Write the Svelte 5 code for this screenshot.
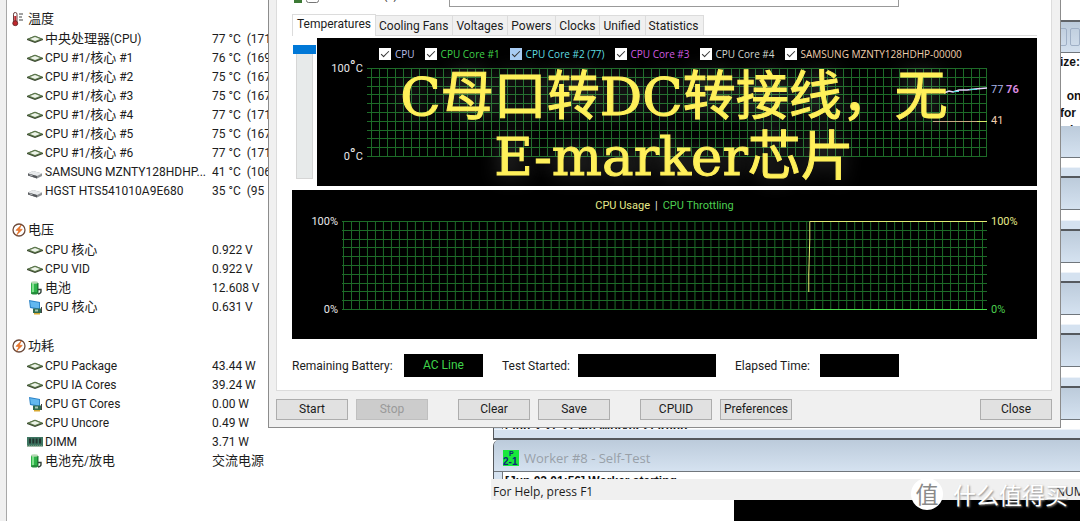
<script>
  const groups = [
    {
      title: '温度', icon: 'thermo',
      rows: [
        ['chip', '中央处理器(CPU)', '77 °C  (171'],
        ['chip', 'CPU #1/核心 #1', '76 °C  (169'],
        ['chip', 'CPU #1/核心 #2', '75 °C  (167'],
        ['chip', 'CPU #1/核心 #3', '75 °C  (167'],
        ['chip', 'CPU #1/核心 #4', '77 °C  (171'],
        ['chip', 'CPU #1/核心 #5', '75 °C  (167'],
        ['chip', 'CPU #1/核心 #6', '77 °C  (171'],
        ['disk', 'SAMSUNG MZNTY128HDHP...', '41 °C  (106'],
        ['disk', 'HGST HTS541010A9E680', '35 °C  (95']
      ]
    },
    {
      title: '电压', icon: 'bolt',
      rows: [
        ['chip', 'CPU 核心', '0.922 V'],
        ['chip', 'CPU VID', '0.922 V'],
        ['battery', '电池', '12.608 V'],
        ['screen', 'GPU 核心', '0.631 V']
      ]
    },
    {
      title: '功耗', icon: 'bolt',
      rows: [
        ['chip', 'CPU Package', '43.44 W'],
        ['chip', 'CPU IA Cores', '39.24 W'],
        ['screen', 'CPU GT Cores', '0.00 W'],
        ['chip', 'CPU Uncore', '0.49 W'],
        ['dimm', 'DIMM', '3.71 W'],
        ['battery', '电池充/放电', '交流电源']
      ]
    }
  ];

  const tabs = ['Temperatures', 'Cooling Fans', 'Voltages', 'Powers', 'Clocks', 'Unified', 'Statistics'];
  let activeTab = $state('Temperatures');

  let series = $state([
    { name: 'CPU', color: '#b9bfe8', on: true },
    { name: 'CPU Core #1', color: '#3fd24a', on: true },
    { name: 'CPU Core #2 (77)', color: '#5fdde0', on: true, hot: true },
    { name: 'CPU Core #3', color: '#d05be0', on: true },
    { name: 'CPU Core #4', color: '#d0d8d0', on: true },
    { name: 'SAMSUNG MZNTY128HDHP-00000', color: '#f0cfae', on: true }
  ]);

  const workers = [2, 3, 4, 5, 6, 7];
  const steps = (start, gap, count) => Array.from({ length: count }, (_, i) => start + i * gap);

  // Chinese runs are set one pixel larger than the Latin text beside them.
  const runs = (text) => text.split(/([\u4e00-\u9fff]+)/).filter(Boolean);
  const isHan = (run) => /[\u4e00-\u9fff]/.test(run);
</script>

{#snippet icon(kind)}
  {#if kind === 'chip'}
    <svg width="16" height="16" viewBox="0 0 16 16" aria-hidden="true">
      <path d="M0 8 8 4.800 16 8v1l-8 3-8-3z" fill="#39442f" />
      <path d="M0 8 8 4.800 16 8l-8 3z" fill="#5f7b4e" />
      <path d="M3 8l5-2 5 2-5 1.900z" fill="#eef4ea" />
    </svg>
  {:else if kind === 'disk'}
    <svg width="16" height="16" viewBox="0 0 16 16" aria-hidden="true">
      <path d="M1 9.500 6 7l9 2.500V12l-5 2.500-9-3z" fill="#8d9093" />
      <path d="M1 9.500 6 7l9 2.500-5 2.500z" fill="#e8eaec" />
      <path d="m1 9.500 9 2.500v2.500l-9-3z" fill="#55585c" />
      <path d="m2.500 10.800 3 .9" stroke="#bfc3c6" />
    </svg>
  {:else if kind === 'battery'}
    <svg width="16" height="16" viewBox="0 0 16 16" aria-hidden="true">
      <path d="M4 2.500h7v11H4z" fill="#2fb34a" />
      <path d="M5 3h2v10H5z" fill="#7fe08c" />
      <path d="M10 3h1.500v10H10z" fill="#1c7f33" />
      <ellipse cx="7.500" cy="2.500" rx="3.500" ry="1.200" fill="#b6d8b4" />
      <ellipse cx="7.500" cy="13.300" rx="3.500" ry="1.300" fill="#238a3a" />
      <path d="M11 9.500h3v2q0 2-3 2.500" fill="none" stroke="#33423a" stroke-width="1.400" />
    </svg>
  {:else if kind === 'screen'}
    <svg width="16" height="16" viewBox="0 0 16 16" aria-hidden="true">
      <path d="m2 1 11 2v8L3 9z" fill="#2c83c7" />
      <path d="m3 2.200 9 1.600v5.800L4 8z" fill="#62b8ef" />
      <path d="M6 9.500h9V14H6z" fill="#2f6b50" />
      <path d="M8 10.500h3v2H8z" fill="#a8c7b4" />
      <path d="M7 14h6v1.500H7z" fill="#d8a932" />
      <path d="M14.500 8v6" stroke="#444" />
    </svg>
  {:else if kind === 'dimm'}
    <svg width="16" height="16" viewBox="0 0 16 16" aria-hidden="true">
      <path d="M0 3h16v9.500H0z" fill="#3d7561" />
      <path d="M2 4.500h2v5H2zm3.300 0h2v5h-2zm3.300 0h2v5h-2zm3.400 0h2v5h-2z" fill="#22352f" />
      <path d="M0 12h16" stroke="#9fb58c" stroke-dasharray="1 1" />
    </svg>
  {:else if kind === 'thermo'}
    <svg width="14" height="16" viewBox="0 0 14 16" aria-hidden="true">
      <rect x="1.500" y="1.500" width="3.500" height="10" rx="1.700" fill="#fff" stroke="#6b3d3d" />
      <path d="M3.250 5v8" stroke="#c0272d" stroke-width="2" />
      <circle cx="3.250" cy="12.200" r="2.500" fill="#c0272d" stroke="#5c2323" stroke-width=".8" />
      <path d="M7 3h4M7 6h3M7 9h4" stroke="#444" stroke-width="1.200" />
    </svg>
  {:else}
    <svg width="14" height="14" viewBox="0 0 14 14" aria-hidden="true">
      <circle cx="7" cy="7" r="6" fill="#fff" stroke="#6d4a3a" stroke-width="1.300" />
      <path d="M9.200 2 4 7.300l3 .2L4.600 12 10.300 6.400l-3-.2z" fill="#f07a2a" stroke="#d9611a" stroke-width=".6" />
    </svg>
  {/if}
{/snippet}

{#snippet mixed(text)}<span>{#each runs(text) as run}{#if isHan(run)}<span class="han">{run}</span>{:else}{run}{/if}{/each}</span>{/snippet}

<div class="desktop">
  <section class="sensors" aria-label="传感器">
    {#each groups as group}
      <table>
        <colgroup><col class="name" /><col /></colgroup>
        <thead>
          <tr><th colspan="2"><span class="cell head">{@render icon(group.icon)}{@render mixed(group.title)}</span></th></tr>
        </thead>
        <tbody>
          {#each group.rows as [kind, name, value]}
            <tr>
              <td><span class="cell">{@render icon(kind)}{@render mixed(name)}</span></td>
              <td>{@render mixed(value)}</td>
            </tr>
          {/each}
        </tbody>
      </table>
    {/each}
  </section>

  <div class="console"></div>

  <section class="mdi" aria-label="Workers">
    <div class="top">
      <div class="blank"></div>
      <div class="caption"><i></i><i></i></div>
      <div class="log"><p>ize:</p><p></p><p>&nbsp; on</p><p>for</p><p>a b</p></div>
    </div>
    <div class="stack">
      {#each workers as id}
        <div class="worker">
          <div class="bar"></div>
          <div class="output">{#if id === 7}[Jun 2 21:21:50] Worker starting{/if}</div>
          <div class="edge"></div>
        </div>
      {/each}
    </div>
    <div class="worker last">
      <div class="bar">
        <svg width="16" height="16" viewBox="0 0 16 16" aria-hidden="true">
          <rect width="16" height="16" fill="#19e83c" />
          <text x="6" y="6" class="glyph small">P</text>
          <text x="0" y="15" class="glyph">2-1</text>
        </svg>
        Worker #8 - Self-Test
      </div>
      <div class="output">[Jun 02 01:56] Worker starting</div>
    </div>
    <footer class="status"><span>For Help, press F1</span><span class="num">NUM</span></footer>
  </section>

  <main class="dialog">
    <div class="sheet">
      <div class="options">
        <label class="stress"><span class="led"></span><input type="checkbox" />Stress GPU(s)</label>
        <div class="listbox"></div>
      </div>

      <div class="tabs" role="tablist">
        {#each tabs as tab}
          <button role="tab" class:active={tab === activeTab} aria-selected={tab === activeTab} onclick={() => (activeTab = tab)}>{tab}</button>
        {/each}
      </div>

      <div class="page">
        <div class="meter"><div class="thumb"></div><div class="track"></div></div>
        <div class="chart temps">
          <div class="legend">
            {#each series as s}
              <label style:color={s.color}>
                <input type="checkbox" class:hot={s.hot} bind:checked={s.on} />{s.name}
              </label>
            {/each}
          </div>
          <div class="plot">
            <div class="axis"><span>100<b>°</b>C</span><span>0<b>°</b>C</span></div>
            <svg class="graph" viewBox="0 0 620 89" preserveAspectRatio="none" aria-hidden="true">
              <g class="grid">
                {#each steps(4, 8, 77) as x}<path d="M{x}.5 0v89" />{/each}
                <path d="M619.500 0v89" />
                {#each steps(0, 8.8, 11) as y}<path d="M0 {Math.round(y) + 0.5}h620" />{/each}
              </g>
              <path d="M577 25l5-2 4 1 6-2 8 0 8-1 12-1" fill="none" stroke="#e6d8ff" stroke-width="1.500" />
              <path d="M586 23.500h6m10-2h8" stroke="#5fdde0" />
              <path d="M566 53.500h54" stroke="#c9a982" />
              <path d="M610 53.500h10" stroke="#d8e86a" />
            </svg>
            <div class="readings">
              <span class="hi"><em>77</em> <strong>76</strong></span>
              <span class="lo">41</span>
            </div>
          </div>
        </div>
      </div>

      <div class="chart usage">
        <div class="key"><span class="y">CPU Usage</span><span>|</span><span class="g">CPU Throttling</span></div>
        <div class="plot">
          <div class="axis"><span>100%</span><span>0%</span></div>
          <svg class="graph" viewBox="0 0 646 89" preserveAspectRatio="none" aria-hidden="true">
            <g class="grid">
              {#each steps(1, 8, 81) as x}<path d="M{x}.5 0v89" />{/each}
              {#each steps(0, 8.8, 11) as y}<path d="M0 {Math.round(y) + 0.5}h646" />{/each}
            </g>
            <path d="M467.500 71V53l1-35V.5H646" fill="none" stroke="#e4ec74" />
            <path d="M469 88.500h177" stroke="#4be04b" />
          </svg>
          <div class="axis right"><span class="y">100%</span><span class="g">0%</span></div>
        </div>
      </div>

      <div class="info">
        <div class="field battery"><span>Remaining Battery:</span><output>AC Line</output></div>
        <div class="field started"><span>Test Started:</span><output></output></div>
        <div class="field elapsed"><span>Elapsed Time:</span><output></output></div>
      </div>
    </div>

    <div class="actions">
      <button>Start</button>
      <button disabled>Stop</button>
      <button class="gap">Clear</button>
      <button>Save</button>
      <button class="gap">CPUID</button>
      <button>Preferences</button>
      <button class="close">Close</button>
    </div>
  </main>

  <p class="headline">C母口转DC转接线，无<br />E-marker芯片</p>

  <div class="brand"><span class="badge">值</span><span class="brand-name">什么值得买</span></div>
</div>

<style>
  :global(body) { margin: 0; }

  .desktop {
    position: relative;
    min-height: 521px;
    height: 100vh;
    overflow: hidden;
    background: #fff;
    color: #1c1c1c;
    font: 12px/16px Roboto, "Noto Sans CJK SC", sans-serif;
  }
  p { margin: 0; }
  button, input { font: inherit; color: inherit; margin: 0; }

  .sensors {
    box-sizing: border-box;
    height: 100%;
    padding: 9px 0 0 5px;
    border-left: 6px solid #f0f0f0;
    box-shadow: inset 1px 0 #a8a8a8;
    display: flex;
    flex-direction: column;
    gap: 20px;
  }
  table { border-collapse: collapse; table-layout: fixed; width: 300px; }
  th, td { padding: 0; height: 19px; font-weight: 400; text-align: left; white-space: pre; }
  th { height: 20px; }
  .han { font-size: 13px; }
  .cell { display: flex; align-items: center; gap: 2px; padding-left: 16px; }
  .cell svg { flex: none; }
  .head { padding-left: 1px; }
  .name { width: 201px; }

  .console { position: absolute; left: 734px; right: 0; top: 500px; bottom: 0; background: #000; }

  .mdi {
    position: absolute;
    left: 491px;
    right: 0;
    top: 0;
    height: 500px;
    display: flex;
    flex-direction: column;
    background: #fff;
    font-family: "Open Sans", sans-serif;
  }
  .top { height: 126px; overflow: hidden; flex: none; }
  .blank { height: 20px; border-bottom: 2px solid #606468; }
  .caption {
    height: 30px;
    display: flex;
    justify-content: flex-end;
    align-items: center;
    gap: 3px;
    border-bottom: 1px solid #70767c;
    background: linear-gradient(#bccbdb, #d3e0ee);
  }
  .caption i { width: 8px; height: 16px; border: 1px solid #9fb0c6; border-radius: 2px; }
  .log { width: 20px; margin-left: auto; font: bold 12px/16px "Liberation Sans", sans-serif; color: #111; white-space: pre; }
  .log p { height: 16px; padding-top: 1px; }

  .stack { flex: 1; display: flex; flex-direction: column; min-height: 0; }
  .worker {
    flex: 1;
    display: flex;
    flex-direction: column;
    margin-left: 2px;
    border-left: 1px solid #55595e;
    background: #d5e2f0;
    overflow: hidden;
  }
  .bar {
    height: 32px;
    flex: none;
    display: flex;
    align-items: center;
    gap: 5px;
    padding: 5px 0 0 9px;
    box-sizing: border-box;
    background: linear-gradient(#bccbdb, #d5e2f0);
    border-bottom: 1px solid #70767c;
    color: #98a0a8;
    font-size: 13px;
  }
  .output {
    flex: 1;
    margin-left: 8px;
    padding-left: 2px;
    border-left: 1px solid #70767c;
    background: #fff;
    color: #111;
    overflow: hidden;
    font: bold 12px/18px "Liberation Sans", sans-serif;
  }
  .edge { height: 8px; flex: none; border-top: 1px solid #eef3f9; border-bottom: 2px solid #55595e; }
  .last { flex: none; height: 39px; border-top-left-radius: 6px; }
  .glyph { font: bold 10px "Liberation Sans", sans-serif; fill: #10247c; }
  .small { font-size: 7px; }
  .status {
    height: 21px;
    box-sizing: border-box;
    flex: none;
    display: flex;
    align-items: center;
    justify-content: space-between;
    padding: 4px 0 0 2px;
    background: #f0f0f0;
  }
  .num { width: 24px; overflow: hidden; }

  .dialog {
    position: absolute;
    left: 268px;
    right: 19px;
    top: 0;
    box-sizing: border-box;
    padding: 0 8px 7px 7px;
    border: 1px solid #8c8c8c;
    border-top: 0;
    background: #f0f0f0;
  }
  .sheet {
    padding: 0 14px 13px 15px;
    border: 1px solid #dcdcdc;
    border-top: 0;
    background: #fff;
  }
  .options { display: flex; height: 14px; }
  .stress { display: flex; align-items: flex-end; gap: 4px; height: 3px; width: 157px; overflow: hidden; white-space: nowrap; }
  .stress input { flex: none; }
  .led { width: 8px; height: 8px; margin-left: 2px; background: #3c7a35; flex: none; }
  .listbox { flex: 0 1 448px; height: 6px; border: 1px solid #999; border-top: 0; }

  .tabs { display: flex; align-items: flex-end; height: 21px; border-bottom: 1px solid #dcdcdc; }
  .tabs button {
    height: 20px;
    padding: 0 4px 0 3px;
    border: 1px solid #dcdcdc;
    border-left: 0;
    border-bottom: 0;
    background: #f0f0f0;
    white-space: nowrap;
  }
  .tabs .active { height: 22px; margin-bottom: -1px; padding: 0 4px 3px; border-left: 1px solid #dcdcdc; background: #fff; }

  .page { display: flex; padding-top: 2px; }
  .meter { width: 25px; padding-top: 7px; flex: none; }
  .thumb { width: 23px; height: 9px; margin-left: 1px; background: #0078d7; }
  .track { width: 15px; height: 124px; margin-left: 4px; border: 1px solid #d6d6d6; border-top: 0; background: #e7eaea; }

  .chart { background: #000; color: #e8e8e8; font-size: 11px; }
  .temps { flex: 1; min-width: 0; height: 148px; }
  .legend {
    display: flex;
    gap: 10px;
    padding: 8px 0 0 62px;
    height: 22px;
    white-space: nowrap;
    font-family: "Open Sans", sans-serif;
    font-size: 10px;
  }
  .legend label { display: flex; align-items: center; gap: 4px; height: 16px; }
  .legend input {
    appearance: none;
    width: 12px;
    height: 12px;
    background: #fff;
  }
  .legend input:checked::before {
    content: "";
    display: block;
    width: 8px;
    height: 4px;
    margin: 3px 0 0 2px;
    border: solid #333;
    border-width: 0 0 1px 1px;
    box-sizing: border-box;
    transform: rotate(-45deg);
  }
  .legend .hot { background: #a9ccf3; }
  .plot { display: flex; height: 89px; }
  .graph { flex: 1; min-width: 0; height: 89px; display: block; }
  .grid { stroke: #1d6b28; fill: none; }
  .axis {
    width: 46px;
    flex: none;
    padding-right: 4px;
    display: flex;
    flex-direction: column;
    justify-content: space-between;
    align-items: flex-end;
    margin: -8px 0;
    line-height: 17px;
  }
  .axis b { font-weight: 400; font-size: 16px; line-height: 10px; }
  .right { width: 46px; padding: 0 0 0 4px; align-items: flex-start; }
  .readings { width: 46px; padding-left: 4px; flex: none; }
  .hi, .lo { display: block; margin-top: 14px; }
  .hi em { font-style: normal; color: #a9b6e8; }
  .hi strong { font-weight: 700; color: #d98be0; }
  .lo { margin-top: 15px; color: #f0cfae; }

  .usage { margin-top: 4px; height: 149px; }
  .key { display: flex; justify-content: center; gap: 5px; padding-top: 8px; height: 23px; }
  .y { color: #e6ea8a; }
  .g { color: #4ccf50; }

  .info { display: flex; gap: 19px; margin-top: 15px; white-space: nowrap; }
  .field { display: flex; align-items: center; justify-content: space-between; }
  .field output { width: 79px; height: 23px; background: #000; color: #3fd24a; line-height: 23px; text-align: center; }
  .battery { width: 191px; }
  .started { width: 214px; }
  .started output { width: 138px; }
  .elapsed { width: 164px; }

  .actions { display: flex; gap: 8px; padding-top: 8px; }
  .actions button {
    width: 72px;
    height: 21px;
    padding: 0;
    border: 1px solid #adadad;
    background: #e1e1e1;
    line-height: 19px;
  }
  .actions button:disabled { background: #cccccc; border-color: #bfbfbf; color: #9a9a9a; }
  .actions .gap { margin-left: 22px; }
  .actions .close { margin-left: auto; }

  .headline {
    position: absolute;
    left: 268px;
    right: 0;
    top: 67px;
    text-align: center;
    white-space: nowrap;
    pointer-events: none;
    font: 53px/60px "DejaVu Serif", "Noto Sans CJK SC", serif;
    color: #fff05a;
    -webkit-text-stroke: 1px #fff05a;
    text-shadow: 0 0 20px rgba(255, 255, 255, 0.3);
  }

  .brand {
    position: absolute;
    right: 12px;
    top: 478px;
    display: flex;
    align-items: center;
    gap: 10px;
    font-family: "Noto Sans CJK SC", sans-serif;
  }
  .badge {
    width: 32px;
    height: 32px;
    border-radius: 50%;
    background: #fff;
    color: #8a8a8a;
    font-size: 23px;
    line-height: 30px;
    text-align: center;
  }
  .brand-name { color: #fff; font-size: 23px; line-height: 32px; text-shadow: 1px 1px 2px #8a8a8a; }
</style>
